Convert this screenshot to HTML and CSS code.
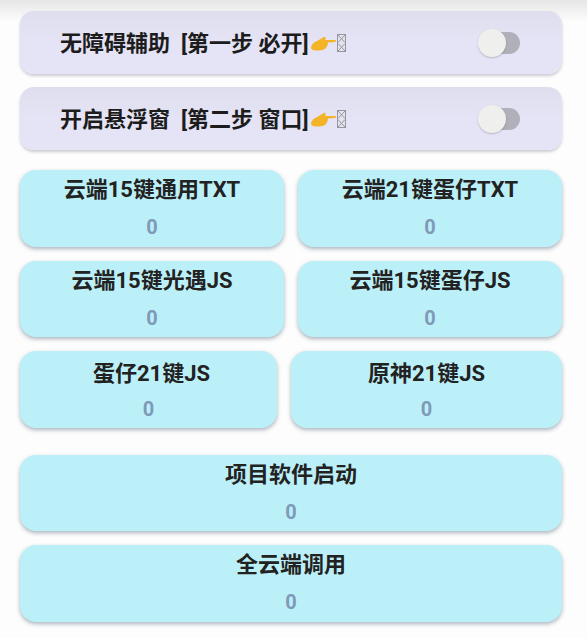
FILE: index.html
```html
<!DOCTYPE html>
<html lang="zh-CN">
<head>
    <meta charset="UTF-8">
    <meta name="viewport" content="width=device-width, initial-scale=1.0">
    <title>云端调用</title>
    <link rel="stylesheet" href="styles.css">
</head>
<body>

    <div class="top-shade"></div>

    <div class="page">
        <div class="switch-card">
            <div class="switch-title">
                <span>无障碍辅助&nbsp; [第一步 必开]</span>
                <svg class="hand" viewBox="0 0 25 15"><path d="M0 11 C1 8 3 6 6 5 L12 1.500 C14 0.500 15.500 1.500 14.500 3 L14 4 L24 4 C25.300 4 25.300 6 24 6 L17 6.500 C17 9 15.500 12 13 13.500 C9 15 3 14.800 1 13.500 C0.300 13 0 12 0 11 Z" /></svg>
                <svg class="tofu" viewBox="0 0 9 18"><rect x="0.500" y="0.500" width="8" height="17" /><path d="M1 1 L8 8.500 M8 1 L1 8.500 M1 9.500 L8 17 M8 9.500 L1 17" /></svg>
            </div>
            <div class="toggle"><div class="toggle-knob"></div></div>
        </div>

        <div class="switch-card">
            <div class="switch-title">
                <span>开启悬浮窗&nbsp; [第二步 窗口]</span>
                <svg class="hand" viewBox="0 0 25 15"><path d="M0 11 C1 8 3 6 6 5 L12 1.500 C14 0.500 15.500 1.500 14.500 3 L14 4 L24 4 C25.300 4 25.300 6 24 6 L17 6.500 C17 9 15.500 12 13 13.500 C9 15 3 14.800 1 13.500 C0.300 13 0 12 0 11 Z" /></svg>
                <svg class="tofu" viewBox="0 0 9 18"><rect x="0.500" y="0.500" width="8" height="17" /><path d="M1 1 L8 8.500 M8 1 L1 8.500 M1 9.500 L8 17 M8 9.500 L1 17" /></svg>
            </div>
            <div class="toggle"><div class="toggle-knob"></div></div>
        </div>

        <div class="btn-row first-row">
            <div class="count-card">
                <div class="count-title">云端15键通用TXT</div>
                <div class="count-num">0</div>
            </div>
            <div class="count-card">
                <div class="count-title">云端21键蛋仔TXT</div>
                <div class="count-num">0</div>
            </div>
        </div>

        <div class="btn-row">
            <div class="count-card">
                <div class="count-title">云端15键光遇JS</div>
                <div class="count-num">0</div>
            </div>
            <div class="count-card">
                <div class="count-title">云端15键蛋仔JS</div>
                <div class="count-num">0</div>
            </div>
        </div>

        <div class="btn-row narrow-left">
            <div class="count-card">
                <div class="count-title">蛋仔21键JS</div>
                <div class="count-num">0</div>
            </div>
            <div class="count-card">
                <div class="count-title">原神21键JS</div>
                <div class="count-num">0</div>
            </div>
        </div>

        <div class="count-card wide-first">
            <div class="count-title">项目软件启动</div>
            <div class="count-num">0</div>
        </div>

        <div class="count-card wide">
            <div class="count-title">全云端调用</div>
            <div class="count-num">0</div>
        </div>
    </div>

</body>
</html>
```

FILE: styles.css
```css
* {
    margin: 0;
    padding: 0;
    box-sizing: border-box;
    font-family: Roboto, "Noto Sans CJK SC", sans-serif;
}

html, body {
    height: 100%;
}

body {
    background-color: #fdfdfd;
    overflow: hidden;
    position: relative;
}

.top-shade {
    position: absolute;
    top: 0;
    left: 0;
    right: 0;
    height: 22px;
    background: linear-gradient(#e6e6e6, #fdfdfd);
}

.page {
    position: relative;
    padding: 11px 25px 0 20px;
}

.switch-card {
    height: 63px;
    margin-bottom: 13px;
    padding: 0 42px 0 40px;
    display: flex;
    justify-content: space-between;
    align-items: center;
    background: linear-gradient(#dfdeee, #e5e4f6 50%);
    border-radius: 14px;
    box-shadow: 0 2px 3px rgba(90, 90, 110, 0.3);
}

.switch-title {
    display: flex;
    align-items: center;
    padding-bottom: 4px;
    font-size: 22px;
    font-weight: 700;
    color: #1c1c1c;
}

.hand {
    width: 25px;
    height: 15px;
    margin-top: 6px;
    margin-left: 2px;
    fill: #f3b428;
}

.tofu {
    width: 9px;
    height: 18px;
    margin-left: 1px;
    margin-top: 4px;
    fill: #e4e4ee;
    stroke: #96969e;
    stroke-width: 1;
}

.toggle {
    width: 40px;
    height: 22px;
    background: #b0b0ba;
    border-radius: 11px;
    position: relative;
}

.toggle-knob {
    position: absolute;
    left: -2px;
    top: -3px;
    width: 28px;
    height: 28px;
    background: #efefed;
    border-radius: 50%;
    box-shadow: 0 1px 2px rgba(0, 0, 0, 0.2);
}

.btn-row {
    display: grid;
    grid-template-columns: 264px 264px;
    column-gap: 14px;
    margin-bottom: 14px;
}

.first-row {
    margin-top: 20px;
}

.narrow-left {
    grid-template-columns: 257px 271px;
}

.count-card {
    height: 76.5px;
    padding-top: 7px;
    text-align: center;
    background: #bcf0f8;
    border-radius: 16px;
    box-shadow: 0 2px 4px rgba(70, 90, 110, 0.45);
}

.narrow-left .count-card {
    padding-top: 10px;
}

.narrow-left .count-card:first-child .count-title {
    padding-left: 6px;
}

.narrow-left .count-num {
    margin-top: 10px;
}

.wide-first {
    margin-top: 27px;
    margin-bottom: 14px;
}

.count-title {
    font-size: 22px;
    line-height: 26px;
    font-weight: 700;
    color: #222222;
}

.count-num {
    margin-top: 12px;
    font-size: 20px;
    line-height: 24px;
    font-weight: 700;
    color: #7f9ab8;
}
```
